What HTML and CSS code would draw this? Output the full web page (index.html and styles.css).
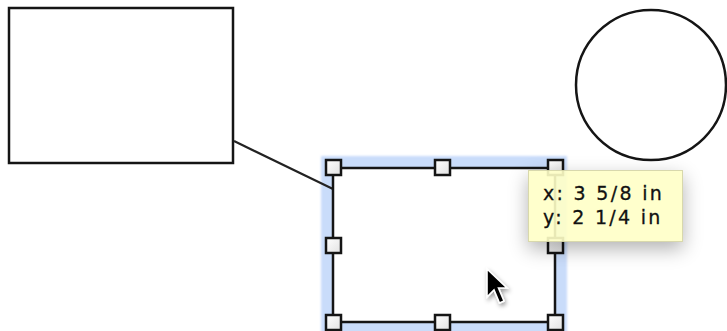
FILE: index.html
```html
<!DOCTYPE html>
<html>
<head>
<meta charset="utf-8">
<link rel="stylesheet" href="styles.css">
</head>
<body>
<div class="canvas">
  <svg class="drawing" width="727" height="331" viewBox="0 0 727 331">
    <defs>
      <filter id="glow" x="-10%" y="-10%" width="120%" height="120%">
        <feGaussianBlur stdDeviation="0.8"/>
      </filter>
      <linearGradient id="hg" x1="0" y1="0" x2="1" y2="1">
        <stop offset="0" stop-color="#ffffff"/>
        <stop offset="1" stop-color="#e2e2e2"/>
      </linearGradient>
      <filter id="cshadow" x="-50%" y="-50%" width="200%" height="200%">
        <feDropShadow dx="1.5" dy="2.5" stdDeviation="2" flood-color="#000" flood-opacity="0.4"/>
      </filter>
    </defs>
    <rect x="9" y="8" width="224" height="155" fill="#fff" stroke="#151515" stroke-width="2.5"/>
    <circle cx="651" cy="85" r="75" fill="#fff" stroke="#151515" stroke-width="2.5"/>
    <rect x="321" y="156" width="246" height="180" fill="#c9dcfa" filter="url(#glow)"/>
    <line x1="234" y1="141" x2="333" y2="189" stroke="#222" stroke-width="2.2"/>
    <rect x="333" y="168" width="222" height="154" fill="#fff" stroke="#151515" stroke-width="2.5"/>
    <g fill="url(#hg)" stroke="#151515" stroke-width="2.5">
      <rect x="326" y="160" width="15" height="15"/>
      <rect x="435" y="160" width="15" height="15"/>
      <rect x="548" y="160" width="15" height="15"/>
      <rect x="326" y="238" width="15" height="15"/>
      <rect x="548" y="238" width="15" height="15"/>
      <rect x="326" y="315" width="15" height="15"/>
      <rect x="435" y="315" width="15" height="15"/>
      <rect x="548" y="315" width="15" height="15"/>
    </g>
    <path d="M487 269 L487 297 L494 290 L499.5 303 L504 301 L498.5 288 L507 288 Z" fill="#000" stroke="#fff" stroke-width="1.6" stroke-linejoin="miter" filter="url(#cshadow)"/>
  </svg>
  <div class="tooltip">
    <div class="tip-line">x: 3 5/8 in</div>
    <div class="tip-line">y: 2 1/4 in</div>
  </div>
</div>
</body>
</html>
```

FILE: styles.css
```css
html, body {
  margin: 0;
  padding: 0;
  background: #ffffff;
}
.canvas {
  position: relative;
  width: 727px;
  height: 331px;
  overflow: hidden;
  background: #ffffff;
}
.drawing {
  display: block;
}
.tooltip {
  position: absolute;
  left: 528px;
  top: 170px;
  width: 155px;
  height: 72px;
  box-sizing: border-box;
  padding: 10px 0 0 14px;
  background: rgba(255, 255, 198, 0.9);
  border: 1px solid rgba(190, 190, 150, 0.6);
  box-shadow: 0 7px 18px rgba(0, 0, 0, 0.3);
  font-family: "DejaVu Sans", sans-serif;
  font-size: 19px;
  line-height: 24px;
  letter-spacing: 2.3px;
  color: #111;
  -webkit-text-stroke: 0.3px #111;
}
.tip-line {
  white-space: nowrap;
}
```
